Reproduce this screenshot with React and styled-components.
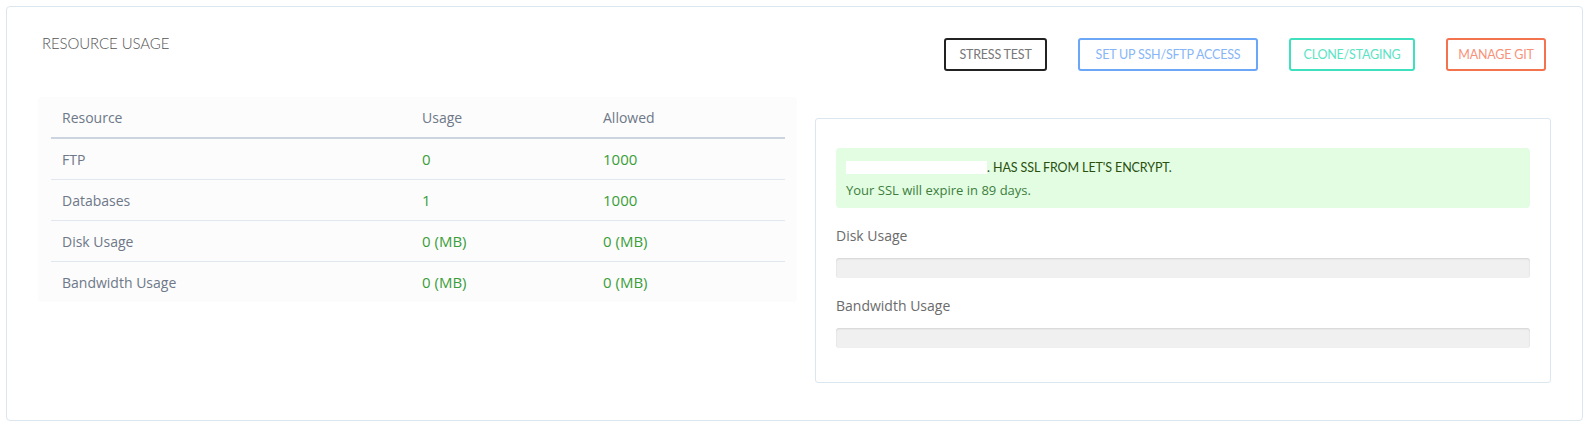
import React from 'react';
import styled, { createGlobalStyle } from 'styled-components';

const GlobalStyle = createGlobalStyle`
  body {
    margin: 0;
    background: #fff;
    font-family: "Open Sans", "Liberation Sans", sans-serif;
  }
`;

const Page = styled.div`
  padding: 6px 8px 9px 6px;
`;

const Card = styled.section`
  border: 1px solid #dce6ef;
  border-radius: 4px;
  padding: 29px 31px 35px 31px;
  height: 415px;
  box-sizing: border-box;
`;

const Header = styled.div`
  display: flex;
  justify-content: space-between;
  align-items: flex-start;
  height: 35px;
`;

const Title = styled.h2`
  margin: 0 0 0 4px;
  font-family: "Lato", "Liberation Sans", sans-serif;
  font-weight: 300;
  font-size: 15px;
  line-height: 15px;
  color: #555;
  letter-spacing: -0.1px;
`;

const Actions = styled.div`
  display: flex;
  gap: 31px;
  margin: 2px 5px 0 0;
`;

const ActionButton = styled.button`
  width: ${p => p.$w}px;
  height: 33px;
  padding: 0;
  background: #fff;
  border: 2px solid ${p => p.$border};
  border-radius: 3px;
  color: ${p => p.$text};
  font-family: "Lato", "Liberation Sans", sans-serif;
  font-size: 12.5px;
  letter-spacing: -0.2px;
  text-transform: uppercase;
  white-space: nowrap;
  cursor: pointer;
`;

const Body = styled.div`
  display: grid;
  grid-template-columns: 759px 1fr;
  gap: 18px;
  margin-top: 26px;
  align-items: start;
`;

const TableWrap = styled.div`
  background: #fcfcfc;
  border-radius: 4px;
  padding: 0 12px 0 13px;
`;

const Row = styled.div`
  display: grid;
  grid-template-columns: 360px 181px 1fr;
  height: 40px;
  align-items: center;
  border-bottom: ${p => (p.$head ? '2px solid #cbd4df' : p.$last ? 'none' : '1px solid #e1e7ee')};
`;

const Cell = styled.div`
  padding-left: 11px;
  font-size: ${p => (p.$value ? '15px' : '14px')};
  color: ${p => (p.$value ? '#3a9e3a' : '#6e7888')};
`;

const Panel = styled.div`
  margin-top: 21px;
  border: 1px solid #dce6ef;
  border-radius: 3px;
  padding: 29px 20px 34px 20px;
`;

const Alert = styled.div`
  background: #e2fde2;
  border-radius: 4px;
  padding: 11px 10px 9px 10px;
  margin-bottom: 18px;
`;

const AlertTitle = styled.div`
  display: flex;
  align-items: center;
  height: 16px;
  font-family: "Lato", "Liberation Sans", sans-serif;
  font-size: 12.5px;
  font-weight: 400;
  color: #2a500f;
  text-transform: uppercase;
  letter-spacing: -0.1px;
`;

const Redacted = styled.span`
  display: inline-block;
  width: 141px;
  height: 13px;
  background: #fff;
`;

const AlertText = styled.div`
  margin-top: 6px;
  font-size: 13px;
  line-height: 18px;
  color: #3e7d3e;
`;

const Label = styled.div`
  font-size: 14px;
  line-height: 20px;
  color: #6b6b6b;
  margin-bottom: 12px;
`;

const Bar = styled.div`
  height: 20px;
  background: #f0f0f0;
  border-radius: 3px;
  box-shadow: inset 0 1px 2px rgba(0, 0, 0, 0.12);
  margin-bottom: ${p => (p.$last ? '0' : '18px')};
`;

const buttons = [
  { label: 'Stress Test', w: 103, border: '#222', text: '#777' },
  { label: 'Set up SSH/SFTP Access', w: 180, border: '#6ba6f7', text: '#87b6f8' },
  { label: 'Clone/Staging', w: 126, border: '#3fe0be', text: '#5ae3c5' },
  { label: 'Manage Git', w: 100, border: '#f3734f', text: '#f8927b' },
];

const rows = [
  ['FTP', '0', '1000'],
  ['Databases', '1', '1000'],
  ['Disk Usage', '0 (MB)', '0 (MB)'],
  ['Bandwidth Usage', '0 (MB)', '0 (MB)'],
];

export default function App() {
  return (
    <Page>
      <GlobalStyle />
      <Card>
        <Header>
          <Title>RESOURCE USAGE</Title>
          <Actions>
            {buttons.map(b => (
              <ActionButton key={b.label} $w={b.w} $border={b.border} $text={b.text}>
                {b.label}
              </ActionButton>
            ))}
          </Actions>
        </Header>
        <Body>
          <TableWrap>
            <Row $head>
              <Cell>Resource</Cell>
              <Cell>Usage</Cell>
              <Cell>Allowed</Cell>
            </Row>
            {rows.map((r, i) => (
              <Row key={r[0]} $last={i === rows.length - 1}>
                <Cell>{r[0]}</Cell>
                <Cell $value>{r[1]}</Cell>
                <Cell $value>{r[2]}</Cell>
              </Row>
            ))}
          </TableWrap>
          <Panel>
            <Alert>
              <AlertTitle>
                <Redacted />. HAS SSL FROM LET'S ENCRYPT.
              </AlertTitle>
              <AlertText>Your SSL will expire in 89 days.</AlertText>
            </Alert>
            <Label>Disk Usage</Label>
            <Bar />
            <Label>Bandwidth Usage</Label>
            <Bar $last />
          </Panel>
        </Body>
      </Card>
    </Page>
  );
}
